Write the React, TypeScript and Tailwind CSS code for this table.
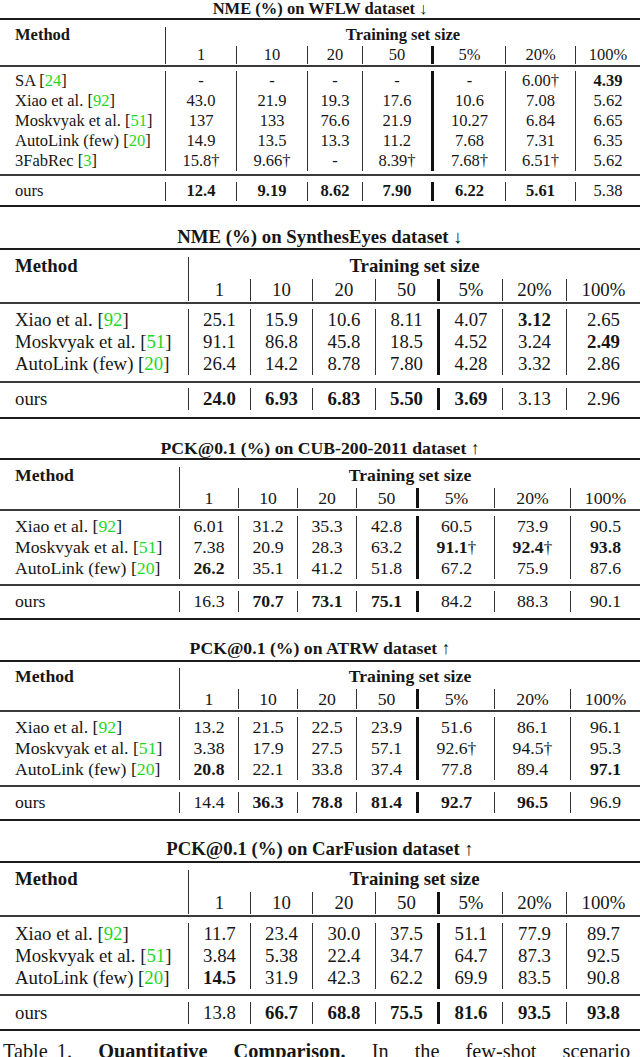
import React, { Fragment } from 'react';

type Row = { name: string; cite: string; vals: string[] };

type Spec = {
  title: string;
  wrap: string;
  titleBox: string;
  cols: string;
  headPad: string;
  row1: string;
  row2: string;
  bodyPad: string;
  rowH: string;
  oursPad: string;
  oursH: string;
  rows: Row[];
  ours: string[];
};

// column separators: the one between "50" and "5%" is the heavy one
const SEP = [
  '',
  'border-l border-[#333]',
  'border-l border-[#333]',
  'border-l border-[#333]',
  'border-l-[3px] border-[#111]',
  'border-l border-[#333]',
  'border-l border-[#333]',
];

const SIZES = ['1', '10', '20', '50', '5%', '20%', '100%'];

const baseRows = (a: string[], b: string[], c: string[]): Row[] => [
  { name: 'Xiao et al.', cite: '92', vals: a },
  { name: 'Moskvyak et al.', cite: '51', vals: b },
  { name: 'AutoLink (few)', cite: '20', vals: c },
];

const TABLES: Spec[] = [
  {
    title: 'NME (%) on WFLW dataset ↓',
    wrap: 'text-[16.5px]',
    titleBox: 'h-[18px]',
    cols: 'grid-cols-[166px_70px_71px_55px_69px_74px_70px_1fr]',
    headPad: 'pt-[7px] pb-[1px]',
    row1: 'h-[19px] pb-[3px]',
    row2: 'h-[18px]',
    bodyPad: 'pt-[4px] pb-[3px]',
    rowH: 'h-[20px]',
    oursPad: 'pt-[6px] pb-[4px]',
    oursH: 'h-[19px]',
    rows: [
      { name: 'SA', cite: '24', vals: ['-', '-', '-', '-', '-', '6.00†', '*4.39'] },
      { name: 'Xiao et al.', cite: '92', vals: ['43.0', '21.9', '19.3', '17.6', '10.6', '7.08', '5.62'] },
      { name: 'Moskvyak et al.', cite: '51', vals: ['137', '133', '76.6', '21.9', '10.27', '6.84', '6.65'] },
      { name: 'AutoLink (few)', cite: '20', vals: ['14.9', '13.5', '13.3', '11.2', '7.68', '7.31', '6.35'] },
      { name: '3FabRec', cite: '3', vals: ['15.8†', '9.66†', '-', '8.39†', '7.68†', '6.51†', '5.62'] },
    ],
    ours: ['*12.4', '*9.19', '*8.62', '*7.90', '*6.22', '*5.61', '5.38'],
  },
  {
    title: 'NME (%) on SynthesEyes dataset ↓',
    wrap: 'text-[18.8px] mt-[19px]',
    titleBox: 'h-[22px]',
    cols: 'grid-cols-[189px_61px_62px_63px_62px_65px_64px_1fr]',
    headPad: 'pt-[7px] pb-[1px]',
    row1: 'h-[22px] pb-[4px]',
    row2: 'h-[22px]',
    bodyPad: 'pt-[5px] pb-[6px]',
    rowH: 'h-[22px]',
    oursPad: 'pt-[5px] pb-[7px]',
    oursH: 'h-[22px]',
    rows: baseRows(
      ['25.1', '15.9', '10.6', '8.11', '4.07', '*3.12', '2.65'],
      ['91.1', '86.8', '45.8', '18.5', '4.52', '3.24', '*2.49'],
      ['26.4', '14.2', '8.78', '7.80', '4.28', '3.32', '2.86'],
    ),
    ours: ['*24.0', '*6.93', '*6.83', '*5.50', '*3.69', '3.13', '2.96'],
  },
  {
    title: 'PCK@0.1 (%) on CUB-200-2011 dataset ↑',
    wrap: 'text-[17.7px] mt-[19px]',
    titleBox: 'h-[20px]',
    cols: 'grid-cols-[180px_58px_59px_59px_60px_78px_76px_1fr]',
    headPad: 'pt-[7px] pb-[1px]',
    row1: 'h-[21px] pb-[4px]',
    row2: 'h-[20px]',
    bodyPad: 'pt-[5px] pb-[5px]',
    rowH: 'h-[21px]',
    oursPad: 'pt-[5px] pb-[6px]',
    oursH: 'h-[21px]',
    rows: baseRows(
      ['6.01', '31.2', '35.3', '42.8', '60.5', '73.9', '90.5'],
      ['7.38', '20.9', '28.3', '63.2', '*91.1†', '*92.4†', '*93.8'],
      ['*26.2', '35.1', '41.2', '51.8', '67.2', '75.9', '87.6'],
    ),
    ours: ['16.3', '*70.7', '*73.1', '*75.1', '84.2', '88.3', '90.1'],
  },
  {
    title: 'PCK@0.1 (%) on ATRW dataset ↑',
    wrap: 'text-[17.7px] mt-[16px]',
    titleBox: 'h-[24px]',
    cols: 'grid-cols-[180px_58px_59px_59px_60px_78px_76px_1fr]',
    headPad: 'pt-[6px] pb-[1px]',
    row1: 'h-[21px] pb-[4px]',
    row2: 'h-[20px]',
    bodyPad: 'pt-[5px] pb-[5px]',
    rowH: 'h-[21px]',
    oursPad: 'pt-[5px] pb-[6px]',
    oursH: 'h-[21px]',
    rows: baseRows(
      ['13.2', '21.5', '22.5', '23.9', '51.6', '86.1', '96.1'],
      ['3.38', '17.9', '27.5', '57.1', '92.6†', '94.5†', '95.3'],
      ['*20.8', '22.1', '33.8', '37.4', '77.8', '89.4', '*97.1'],
    ),
    ours: ['14.4', '*36.3', '*78.8', '*81.4', '*92.7', '*96.5', '96.9'],
  },
  {
    title: 'PCK@0.1 (%) on CarFusion dataset ↑',
    wrap: 'text-[18.8px] mt-[16px]',
    titleBox: 'h-[24px]',
    cols: 'grid-cols-[189px_61px_62px_63px_62px_65px_64px_1fr]',
    headPad: 'pt-[7px] pb-[1px]',
    row1: 'h-[22px] pb-[4px]',
    row2: 'h-[22px]',
    bodyPad: 'pt-[6px] pb-[5px]',
    rowH: 'h-[22px]',
    oursPad: 'pt-[6px] pb-[5px]',
    oursH: 'h-[22px]',
    rows: baseRows(
      ['11.7', '23.4', '30.0', '37.5', '51.1', '77.9', '89.7'],
      ['3.84', '5.38', '22.4', '34.7', '64.7', '87.3', '92.5'],
      ['*14.5', '31.9', '42.3', '62.2', '69.9', '83.5', '90.8'],
    ),
    ours: ['13.8', '*66.7', '*68.8', '*75.5', '*81.6', '*93.5', '*93.8'],
  },
];

function Val({ v }: { v: string }) {
  const bold = v.startsWith('*');
  const s = bold ? v.slice(1) : v;
  const dag = s.endsWith('†');
  const num = dag ? s.slice(0, -1) : s;
  return (
    <span className={bold ? 'font-bold' : ''}>
      {num}
      {dag && <span className="font-normal">†</span>}
    </span>
  );
}

const TopRule = () => <div className="h-[2px] bg-[#1c1c1c]" />;
const MidRule = () => <div className="h-[2px] bg-[#3a3a3a]" />;

function ResultTable({ s }: { s: Spec }) {
  return (
    <section className={s.wrap}>
      <div className={`${s.titleBox} flex items-center justify-center font-bold whitespace-nowrap`}>{s.title}</div>
      <TopRule />

      {/* header */}
      <div className={`grid ${s.cols} ${s.headPad}`}>
        <div className="row-span-2 border-r border-[#333]">
          <div className={`${s.row1} flex items-center pl-[15px] font-bold`}>Method</div>
        </div>
        <div className={`col-span-7 ${s.row1} flex items-center justify-center font-bold whitespace-nowrap`}>
          Training set size
        </div>
        {SIZES.map((n, i) => (
          <div key={n} className={`${s.row2} ${SEP[i]} flex items-center justify-center`}>
            {n}
          </div>
        ))}
      </div>
      <MidRule />

      {/* baselines */}
      <div className={`grid ${s.cols} ${s.bodyPad}`}>
        {s.rows.map((r) => (
          <Fragment key={r.name}>
            <div className={`${s.rowH} border-r border-[#333] pl-[15px] flex items-center whitespace-nowrap`}>
              {r.name} [<span className="text-[#1fd81f]">{r.cite}</span>]
            </div>
            {r.vals.map((v, i) => (
              <div key={i} className={`${s.rowH} ${SEP[i]} flex items-center justify-center whitespace-nowrap`}>
                <Val v={v} />
              </div>
            ))}
          </Fragment>
        ))}
      </div>
      <MidRule />

      {/* ours */}
      <div className={`grid ${s.cols} ${s.oursPad}`}>
        <div className={`${s.oursH} border-r border-[#333] pl-[15px] flex items-center`}>ours</div>
        {s.ours.map((v, i) => (
          <div key={i} className={`${s.oursH} ${SEP[i]} flex items-center justify-center whitespace-nowrap`}>
            <Val v={v} />
          </div>
        ))}
      </div>
      <TopRule />
    </section>
  );
}

export default function App() {
  return (
    <div className="w-[640px] min-h-screen bg-white text-[#161616] font-['Liberation_Serif',serif] overflow-hidden">
      {TABLES.map((t) => (
        <ResultTable key={t.title} s={t} />
      ))}
      <p className="mt-[8px] pl-[3px] text-[20.3px] leading-[24px] whitespace-nowrap [word-spacing:21px]">
        <span className="[word-spacing:4px]">Table 1.</span>{' '}
        <span className="font-bold">Quantitative Comparison.</span> In the few-shot scenario
      </p>
    </div>
  );
}
